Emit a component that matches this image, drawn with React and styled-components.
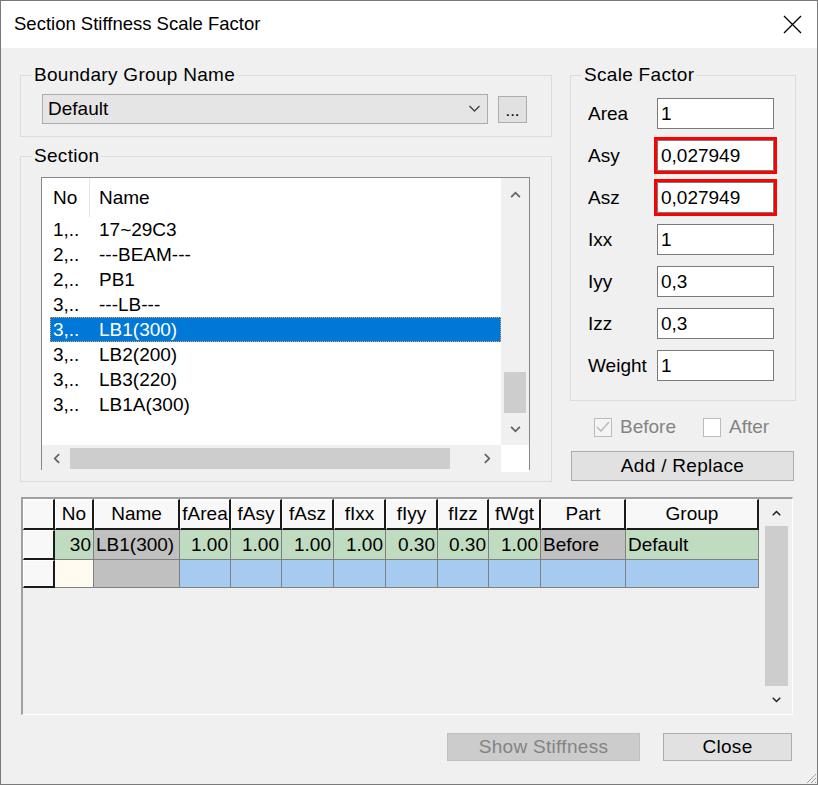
import { Fragment } from "react";
import styled, { createGlobalStyle } from "styled-components";

const GlobalStyle = createGlobalStyle`
  html, body {
    margin: 0;
    padding: 0;
    background: #ffffff;
  }
  body {
    font-family: "Liberation Sans", Arial, sans-serif;
    color: #000;
  }
  * {
    box-sizing: border-box;
  }
`;

const Window = styled.div`
  position: relative;
  width: 818px;
  height: 785px;
  border: 1px solid #7a7a7a;
  background: #f0f0f0;
  display: flex;
  flex-direction: column;
  overflow: hidden;
`;

const TitleBar = styled.div`
  height: 47px;
  flex: none;
  background: #fff;
  display: flex;
  align-items: center;
  justify-content: space-between;
  padding: 0 15px 1px 13px;
  font-size: 18.5px;
`;

const Body = styled.div`
  flex: 1;
  padding: 16px 21px 0 19px;
  display: flex;
  flex-direction: column;
`;

const TopArea = styled.div`
  display: flex;
  gap: 18px;
  align-items: flex-start;
`;

const LeftColumn = styled.div`
  width: 532px;
  display: flex;
  flex-direction: column;
  gap: 8px;
`;

const RightColumn = styled.div`
  width: 226px;
  display: flex;
  flex-direction: column;
`;

const GroupBox = styled.fieldset`
  margin: 0;
  padding: 0;
  min-width: 0;
  border: 1px solid #dcdcdc;
  legend {
    margin-left: 11px;
    padding: 0 2px;
    font-size: 19px;
    line-height: 22px;
    letter-spacing: 0.3px;
  }
`;

const BoundaryRow = styled.div`
  display: flex;
  align-items: center;
  gap: 10px;
  padding: 8px 24px 12px 21px;
`;

const Combo = styled.div`
  width: 446px;
  height: 30px;
  background: #e5e5e5;
  border: 1px solid #acacac;
  display: flex;
  align-items: center;
  justify-content: space-between;
  padding: 0 6px 0 5px;
  font-size: 19px;
`;

const SmallButton = styled.div`
  width: 29px;
  height: 27px;
  background: #e1e1e1;
  border: 1px solid #adadad;
  font-size: 17px;
  text-align: center;
  line-height: 28px;
`;

const SectionBody = styled.div`
  padding: 10px 21px 11px 20px;
`;

const ListBox = styled.div`
  height: 293px;
  border: 1px solid #828790;
  background: #fff;
  display: grid;
  grid-template-columns: 1fr 28px;
  grid-template-rows: 1fr 27px;
`;

const ListContent = styled.div`
  overflow: hidden;
  padding-left: 8px;
  font-size: 19px;
`;

const ListHeader = styled.div`
  height: 39px;
  display: flex;
  align-items: center;
`;

const ListRow = styled.div`
  height: 25px;
  display: flex;
  align-items: center;
  background: ${(p) => (p.$selected ? "#0078d7" : "transparent")};
  color: ${(p) => (p.$selected ? "#fff" : "#000")};
  outline: ${(p) => (p.$selected ? "1px dotted #f0a040" : "none")};
  outline-offset: -1px;
`;

const NoCell = styled.div`
  width: 40px;
  padding-left: 3px;
  align-self: stretch;
  display: flex;
  align-items: center;
  border-right: 1px solid ${(p) => (p.$header ? "#e5e5e5" : "transparent")};
`;

const NameCell = styled.div`
  padding-left: 9px;
`;

const VScroll = styled.div`
  background: #f0f0f0;
  display: flex;
  flex-direction: column;
  align-items: center;
`;

const ScrollArrowBox = styled.div`
  height: ${(p) => p.$size || 30}px;
  width: 100%;
  display: flex;
  align-items: center;
  justify-content: center;
  flex: none;
`;

const ScrollTrack = styled.div`
  flex: 1;
  width: 100%;
  display: flex;
  flex-direction: column;
  align-items: center;
`;

const VThumb = styled.div`
  width: ${(p) => p.$width}px;
  background: #cdcdcd;
  flex: none;
`;

const HScroll = styled.div`
  background: #f0f0f0;
  display: flex;
  align-items: center;
`;

const HThumb = styled.div`
  height: 21px;
  background: #cdcdcd;
  flex: none;
`;

const Corner = styled.div`
  background: #fff;
`;

const ScaleGrid = styled.div`
  display: grid;
  grid-template-columns: 69px 117px;
  row-gap: 11px;
  align-items: center;
  padding: 12px 21px 19px 17px;
  font-size: 19px;
`;

const Field = styled.div`
  height: 31px;
  background: #fff;
  border: 1px solid #7a7a7a;
  padding-left: 3px;
  display: flex;
  align-items: center;
  font-size: 19px;
  box-shadow: ${(p) => (p.$highlight ? "0 0 0 3px #ff0000" : "none")};
`;

const CheckRow = styled.div`
  display: flex;
  align-items: center;
  padding: 15px 0 0 24px;
  font-size: 19px;
  color: #838383;
`;

const CheckBox = styled.div`
  width: 18px;
  height: 19px;
  border: 1px solid #bcbcbc;
  background: ${(p) => (p.$checked ? "#f4f4f4" : "#fff")};
  display: flex;
  align-items: center;
  justify-content: center;
  margin-left: ${(p) => p.$offset || 0}px;
`;

const CheckLabel = styled.span`
  margin-left: 8px;
`;

const PushButton = styled.div`
  width: ${(p) => p.$width}px;
  height: ${(p) => p.$height || 28}px;
  background: ${(p) => (p.$disabled ? "#cccccc" : "#e1e1e1")};
  border: 1px solid ${(p) => (p.$disabled ? "#bfbfbf" : "#adadad")};
  color: ${(p) => (p.$disabled ? "#838383" : "#000")};
  font-size: 19px;
  letter-spacing: 0.3px;
  display: flex;
  align-items: center;
  justify-content: center;
`;

const AddButtonWrap = styled.div`
  margin: 13px 0 0 1px;
`;

const GridBox = styled.div`
  margin: 15px 0 0 1px;
  width: 772px;
  height: 218px;
  border-top: 2px solid #a0a0a0;
  border-left: 2px solid #a0a0a0;
  border-right: 1px solid #fff;
  border-bottom: 1px solid #fff;
  display: flex;
  gap: 3px;
`;

const DataGrid = styled.div`
  width: 736px;
  align-self: flex-start;
  display: grid;
  grid-template-columns: 32px 39px 86px 51px 51px 52px 52px 52px 51px 52px 85px 133px;
  grid-template-rows: 31px 30px 28px;
  font-size: 19px;
`;

const HeadCell = styled.div`
  background: #f8f8f8;
  border-top: 1px solid #fff;
  border-left: 1px solid #fff;
  border-right: 2px solid #1a1a1a;
  border-bottom: 2px solid #1a1a1a;
  display: flex;
  align-items: center;
  justify-content: center;
  overflow: hidden;
  white-space: nowrap;
`;

const DataCell = styled.div`
  background: ${(p) => p.$bg};
  border-right: 1px solid #808080;
  border-bottom: 1px solid #808080;
  display: flex;
  align-items: center;
  justify-content: ${(p) => (p.$align === "left" ? "flex-start" : "flex-end")};
  padding: 0 2px;
  overflow: hidden;
  white-space: nowrap;
`;

const GridScroll = styled.div`
  width: 28px;
  height: 214px;
  background: #f0f0f0;
  display: flex;
  flex-direction: column;
  align-items: center;
`;

const Footer = styled.div`
  margin-top: 18px;
  display: flex;
  justify-content: flex-end;
  gap: 23px;
  padding-right: 4px;
`;

const Grip = styled.svg`
  position: absolute;
  right: 0;
  bottom: 0;
`;

const Chevron = ({ dir = "up", w = 11, h = 7, color = "#606060", sw = 2 }) => {
  const rot = { up: 0, down: 180, left: 270, right: 90 }[dir];
  return (
    <svg width={w} height={h} viewBox="0 0 12 8" style={{ transform: `rotate(${rot}deg)` }}>
      <polyline points="1,7 6,2 11,7" fill="none" stroke={color} strokeWidth={sw} />
    </svg>
  );
};

const sections = [
  ["1,..", "17~29C3"],
  ["2,..", "---BEAM---"],
  ["2,..", "PB1"],
  ["3,..", "---LB---"],
  ["3,..", "LB1(300)", true],
  ["3,..", "LB2(200)"],
  ["3,..", "LB3(220)"],
  ["3,..", "LB1A(300)"],
];

const factors = [
  ["Area", "1"],
  ["Asy", "0,027949", true],
  ["Asz", "0,027949", true],
  ["Ixx", "1"],
  ["Iyy", "0,3"],
  ["Izz", "0,3"],
  ["Weight", "1"],
];

const headers = ["", "No", "Name", "fArea", "fAsy", "fAsz", "fIxx", "fIyy", "fIzz", "fWgt", "Part", "Group"];

const GREEN = "#c0dcc0";
const GRAY = "#c0c0c0";
const BLUE = "#a6caf0";
const IVORY = "#fffbf0";

const row1 = [
  ["30", GREEN],
  ["LB1(300)", GRAY, "left"],
  ["1.00", GREEN],
  ["1.00", GREEN],
  ["1.00", GREEN],
  ["1.00", GREEN],
  ["0.30", GREEN],
  ["0.30", GREEN],
  ["1.00", GREEN],
  ["Before", GRAY, "left"],
  ["Default", GREEN, "left"],
];

const row2 = [IVORY, GRAY, BLUE, BLUE, BLUE, BLUE, BLUE, BLUE, BLUE, BLUE, BLUE];

export default function App() {
  return (
    <>
      <GlobalStyle />
      <Window>
        <TitleBar>
          <span>Section Stiffness Scale Factor</span>
          <svg width="19" height="19" viewBox="0 0 19 19">
            <path d="M1 1 L18 18 M18 1 L1 18" stroke="#000" strokeWidth="1.3" />
          </svg>
        </TitleBar>
        <Body>
          <TopArea>
            <LeftColumn>
              <GroupBox>
                <legend>Boundary Group Name</legend>
                <BoundaryRow>
                  <Combo>
                    <span>Default</span>
                    <Chevron dir="down" w={13} h={8} color="#404040" sw={1.3} />
                  </Combo>
                  <SmallButton>...</SmallButton>
                </BoundaryRow>
              </GroupBox>
              <GroupBox>
                <legend>Section</legend>
                <SectionBody>
                  <ListBox>
                    <ListContent>
                      <ListHeader>
                        <NoCell $header>No</NoCell>
                        <NameCell>Name</NameCell>
                      </ListHeader>
                      {sections.map(([no, name, sel], i) => (
                        <ListRow key={i} $selected={sel}>
                          <NoCell>{no}</NoCell>
                          <NameCell>{name}</NameCell>
                        </ListRow>
                      ))}
                    </ListContent>
                    <VScroll>
                      <ScrollArrowBox $size={32}>
                        <Chevron dir="up" />
                      </ScrollArrowBox>
                      <ScrollTrack>
                        <VThumb $width={22} style={{ height: 41, marginTop: 162 }} />
                      </ScrollTrack>
                      <ScrollArrowBox $size={32}>
                        <Chevron dir="down" />
                      </ScrollArrowBox>
                    </VScroll>
                    <HScroll>
                      <ScrollArrowBox $size={28} style={{ width: 28 }}>
                        <Chevron dir="left" />
                      </ScrollArrowBox>
                      <HThumb style={{ width: 380 }} />
                      <div style={{ flex: 1 }} />
                      <ScrollArrowBox $size={28} style={{ width: 28 }}>
                        <Chevron dir="right" />
                      </ScrollArrowBox>
                    </HScroll>
                    <Corner />
                  </ListBox>
                </SectionBody>
              </GroupBox>
            </LeftColumn>
            <RightColumn>
              <GroupBox>
                <legend>Scale Factor</legend>
                <ScaleGrid>
                  {factors.map(([label, value, hl]) => (
                    <Fragment key={label}>
                      <span>{label}</span>
                      <Field $highlight={hl}>{value}</Field>
                    </Fragment>
                  ))}
                </ScaleGrid>
              </GroupBox>
              <CheckRow>
                <CheckBox $checked>
                  <svg width="14" height="12" viewBox="0 0 14 12">
                    <polyline points="1,6 5,10 13,1" fill="none" stroke="#bcbcbc" strokeWidth="1.6" />
                  </svg>
                </CheckBox>
                <CheckLabel>Before</CheckLabel>
                <CheckBox $offset={27} />
                <CheckLabel>After</CheckLabel>
              </CheckRow>
              <AddButtonWrap>
                <PushButton $width={223} $height={30}>
                  Add / Replace
                </PushButton>
              </AddButtonWrap>
            </RightColumn>
          </TopArea>
          <GridBox>
            <DataGrid>
              {headers.map((h, i) => (
                <HeadCell key={"h" + i}>{h}</HeadCell>
              ))}
              <HeadCell />
              {row1.map(([text, bg, align], i) => (
                <DataCell key={"a" + i} $bg={bg} $align={align}>
                  {text}
                </DataCell>
              ))}
              <HeadCell />
              {row2.map((bg, i) => (
                <DataCell key={"b" + i} $bg={bg} />
              ))}
            </DataGrid>
            <GridScroll>
              <ScrollArrowBox $size={27}>
                <Chevron dir="up" w={9} h={6} color="#222" sw={2} />
              </ScrollArrowBox>
              <ScrollTrack>
                <VThumb $width={23} style={{ height: 160 }} />
              </ScrollTrack>
              <ScrollArrowBox $size={27}>
                <Chevron dir="down" w={9} h={6} color="#222" sw={2} />
              </ScrollArrowBox>
            </GridScroll>
          </GridBox>
          <Footer>
            <PushButton $width={193} $disabled>
              Show Stiffness
            </PushButton>
            <PushButton $width={129}>Close</PushButton>
          </Footer>
        </Body>
        <Grip width="13" height="13" viewBox="0 0 13 13">
          <path d="M12 3 L3 12 M12 7 L7 12 M12 11 L11 12" stroke="#a0a0a0" strokeWidth="1" />
        </Grip>
      </Window>
    </>
  );
}
